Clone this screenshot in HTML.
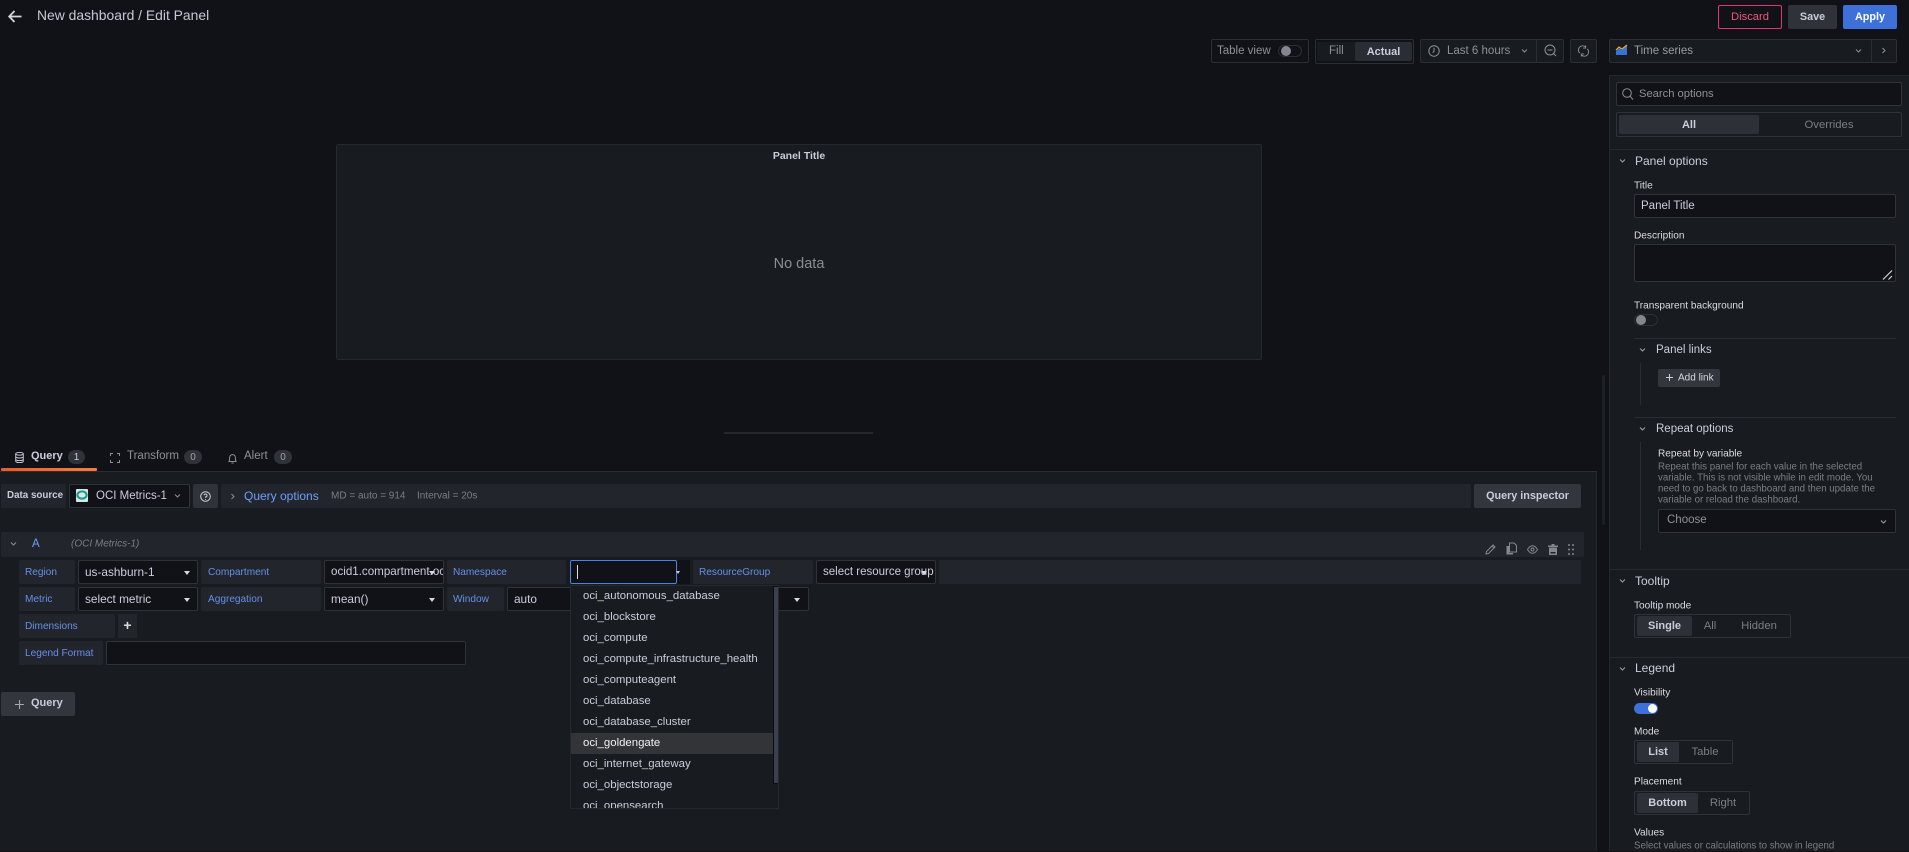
<!DOCTYPE html>
<html><head><meta charset="utf-8"><title>New dashboard / Edit Panel</title>
<style>
html,body{margin:0;padding:0;background:#111217}
body{width:1909px;height:851px;overflow:hidden;position:relative;font-family:"Liberation Sans",sans-serif;font-size:12px;color:#ccccdc}
.a{position:absolute;box-sizing:border-box;white-space:nowrap}
.b{position:absolute;box-sizing:border-box;border:1px solid #2b2e33;border-radius:2px}
.inp{position:absolute;box-sizing:border-box;background:#111217;border:1px solid #2f3237;border-radius:2px;color:#ccccdc;padding-left:6px;white-space:nowrap;overflow:hidden;font-size:11.8px;line-height:22px}
.lab{position:absolute;box-sizing:border-box;background:#22252b;color:#6690e6;font-size:10.1px;line-height:25px;padding-left:6px;border-radius:2px;white-space:nowrap}
.c{position:absolute;width:0;height:0;border-left:3px solid transparent;border-right:3px solid transparent;border-top:4px solid #d8d8e0}
.t{position:absolute;white-space:nowrap;transform:translateY(calc(-50% + 1px))}
.head{font-size:12px;color:#ccccdc}
.fl{font-size:10.1px;color:#dcdce6}
.dd{position:absolute;left:583px;font-size:11.4px;color:#ccccdc;transform:translateY(calc(-50% + 1px));white-space:nowrap}
.rad{position:absolute;box-sizing:border-box;border:1px solid #2f3237;border-radius:2px}
.on{position:absolute;box-sizing:border-box;background:#2d3036;border-radius:2px;color:#ccccdc;text-align:center;font-weight:bold;font-size:11px}
.off{position:absolute;color:#7b7e85;font-size:11.3px;transform:translate(-50%,calc(-50% + 1px));white-space:nowrap}
svg{position:absolute;overflow:visible}
</style></head>
<body>

<!-- header -->
<svg style="left:8px;top:10px" width="14" height="13" viewBox="0 0 14 13" fill="none" stroke="#d5d5e0" stroke-width="1.8"><path d="M13.5 6.5H1.5M6.5 1L1.2 6.5L6.5 12"/></svg>
<div class="t" style="left:37px;top:14px;font-size:13.9px;color:#c8c8d4">New dashboard / Edit Panel</div>

<div class="a" style="left:1718px;top:5px;width:64px;height:24px;border:1px solid #e0336f;border-radius:2px;color:#f2557f;font-size:11.2px;line-height:22px;text-align:center">Discard</div>
<div class="a" style="left:1788px;top:5px;width:49px;height:24px;background:#2f3238;border-radius:2px;color:#ccccdc;font-size:10.8px;font-weight:bold;line-height:24px;text-align:center">Save</div>
<div class="a" style="left:1843px;top:5px;width:54px;height:24px;background:#3d71d9;border-radius:2px;color:#fff;font-size:10.8px;font-weight:bold;line-height:24px;text-align:center">Apply</div>

<!-- toolbar -->
<div class="b" style="left:1211px;top:39px;width:98px;height:24px"></div>
<div class="t" style="left:1217px;top:50px;font-size:11.5px;color:#8e9097">Table view</div>
<div class="a" style="left:1278px;top:45px;width:24px;height:12px;border:1px solid #2b2e33;border-radius:6px"></div>
<div class="a" style="left:1281px;top:46px;width:10px;height:10px;border-radius:50%;background:#85878e"></div>

<div class="b" style="left:1315px;top:39px;width:99px;height:25px"></div>
<div class="a" style="left:1317px;top:42px;width:38px;height:19px;background:#181b1f"></div>
<div class="t" style="left:1329px;top:50px;font-size:11.5px;color:#8e9097">Fill</div>
<div class="a" style="left:1355px;top:42px;width:57px;height:19px;background:#2a2d33;border-radius:2px;color:#ccccdc;font-size:11px;line-height:20px;text-align:center;font-weight:bold">Actual</div>

<div class="b" style="left:1420px;top:39px;width:144px;height:24px;background:#181b1f"></div>
<div class="a" style="left:1536px;top:39px;width:1px;height:24px;background:#2b2e33"></div>
<svg style="left:1428px;top:45px" width="12" height="12" viewBox="0 0 12 12" fill="none" stroke="#8e9097" stroke-width="1"><circle cx="6" cy="6" r="5.2"/><path d="M6 2.8V6.4L4.6 7.6"/></svg>
<div class="t" style="left:1447px;top:50px;font-size:11.5px;color:#8e9097">Last 6 hours</div>
<svg style="left:1521px;top:49px" width="7" height="4" viewBox="0 0 7 4" fill="none" stroke="#8e9097"><path d="M1 .5L3.5 3L6 .5"/></svg>
<svg style="left:1544px;top:44px" width="13" height="13" viewBox="0 0 13 13" fill="none" stroke="#8e9097"><circle cx="6" cy="6" r="5"/><path d="M3.5 6H8.5M9.5 9.5L12 12"/></svg>

<div class="b" style="left:1570px;top:39px;width:27px;height:24px;background:#181b1f"></div>
<svg style="left:1578px;top:45px" width="11" height="12" viewBox="0 0 13 13" fill="none" stroke="#8e9097" stroke-width="1.1"><path d="M2 9A5 5 0 0 1 9 1.8M11 4A5 5 0 0 1 4 11.2M9 0V3H6M4 13V10H7"/></svg>

<div class="b" style="left:1609px;top:39px;width:288px;height:24px;background:#181b1f"></div>
<div class="a" style="left:1871px;top:39px;width:1px;height:24px;background:#2b2e33"></div>
<svg style="left:1616px;top:45px" width="12" height="10" viewBox="0 0 12 10"><path d="M0 6L3 3L6 5L11 0V10H0Z" fill="#3274d9"/><path d="M0 5L3 2L6 4L11 0" fill="none" stroke="#f2a72e" stroke-width="1.2"/></svg>
<div class="t" style="left:1634px;top:50px;font-size:11.5px;color:#9a9ca3">Time series</div>
<svg style="left:1855px;top:49px" width="7" height="4" viewBox="0 0 7 4" fill="none" stroke="#8e9097"><path d="M1 .5L3.5 3L6 .5"/></svg>
<svg style="left:1882px;top:47px" width="4" height="7" viewBox="0 0 4 7" fill="none" stroke="#8e9097"><path d="M.5 1L3 3.5L.5 6"/></svg>

<!-- panel -->
<div class="a" style="left:336px;top:144px;width:926px;height:216px;background:#181b1f;border:1px solid #25282d;border-radius:2px"></div>
<div class="t" style="left:799px;top:156px;font-size:10.5px;font-weight:bold;color:#ccccdc;transform:translate(-50%,-50%)">Panel Title</div>
<div class="t" style="left:799px;top:264px;font-size:14.5px;color:#8b8d94;transform:translate(-50%,-50%)">No data</div>
<div class="a" style="left:724px;top:432px;width:149px;height:2px;background:#24272c"></div>

<!-- tabs -->
<svg style="left:15px;top:452px" width="9" height="11" viewBox="0 0 9 11" fill="none" stroke="#ccccdc" stroke-width=".9"><ellipse cx="4.5" cy="1.8" rx="3.8" ry="1.4"/><path d="M.7 1.8V9.2C.7 10 2.4 10.6 4.5 10.6S8.3 10 8.3 9.2V1.8M.7 4.6C.7 5.4 2.4 6 4.5 6S8.3 5.4 8.3 4.6M.7 7.2C.7 8 2.4 8.6 4.5 8.6S8.3 8 8.3 7.2"/></svg>
<div class="t" style="left:31px;top:455px;font-size:11px;font-weight:bold;color:#ccccdc">Query</div>
<div class="a" style="left:68px;top:450px;width:17px;height:14px;border-radius:7px;background:#2f3238;color:#ccccdc;font-size:10px;line-height:15px;text-align:center">1</div>
<svg style="left:110px;top:453px" width="10" height="10" viewBox="0 0 10 10" fill="none" stroke="#8e9097" stroke-width="1"><path d="M.5 3V.5H3M7 .5H9.500V3M9.500 7V9.500H7M3 9.500H.5V7"/></svg>
<div class="t" style="left:127px;top:455px;font-size:11.500px;color:#8e9097">Transform</div>
<div class="a" style="left:184px;top:450px;width:18px;height:14px;border-radius:7px;background:#2f3238;color:#a0a2a8;font-size:10px;line-height:15px;text-align:center">0</div>
<svg style="left:228px;top:453px" width="9" height="11" viewBox="0 0 9 11" fill="none" stroke="#8e9097"><path d="M1 8.5C1.7 7.5 1.6 6 1.6 4.5A2.9 2.9 0 0 1 7.4 4.5C7.4 6 7.3 7.5 8 8.5ZM3.5 10H5.5"/></svg>
<div class="t" style="left:244px;top:455px;font-size:11.500px;color:#8e9097">Alert</div>
<div class="a" style="left:274px;top:450px;width:18px;height:14px;border-radius:7px;background:#2f3238;color:#a0a2a8;font-size:10px;line-height:15px;text-align:center">0</div>

<!-- query panel -->
<div class="a" style="left:0;top:471px;width:1597px;height:380px;background:#181b1f;border-top:1px solid #2a2d32;border-right:1px solid #25282d"></div>
<div class="a" style="left:1px;top:468px;width:96px;height:3px;background:linear-gradient(90deg,#f05a28,#fb7a3c);border-radius:1px"></div>

<div class="a" style="left:1px;top:484px;width:65px;height:24px;background:#22252b;font-size:9.800px;font-weight:bold;line-height:24px;padding-left:6px;color:#ccccdc">Data source</div>
<div class="inp" style="left:69px;top:484px;width:121px;height:24px;padding-left:26px;font-size:11.500px">OCI Metrics-1</div>
<svg style="left:76px;top:489px" width="12" height="13" viewBox="0 0 12 13"><rect width="12" height="13" rx="1" fill="#d8e6e6"/><ellipse cx="6" cy="6" rx="4.6" ry="3.6" fill="none" stroke="#159a94" stroke-width="2"/></svg>
<svg style="left:174px;top:494px" width="7" height="4" viewBox="0 0 7 4" fill="none" stroke="#8e9097"><path d="M1 .5L3.5 3L6 .5"/></svg>
<div class="a" style="left:193px;top:484px;width:25px;height:24px;background:#2f3238;border-radius:2px"></div>
<svg style="left:200px;top:491px" width="11" height="11" viewBox="0 0 11 11" fill="none" stroke="#ccccdc"><circle cx="5.5" cy="5.5" r="4.8"/><path d="M4 4.2A1.5 1.5 0 1 1 5.5 6V6.8M5.5 8V8.8"/></svg>
<div class="a" style="left:221px;top:484px;width:1250px;height:24px;background:#22252b;border-radius:2px"></div>
<svg style="left:231px;top:493px" width="4" height="7" viewBox="0 0 4 7" fill="none" stroke="#8e9097"><path d="M.5 1L3 3.5L.5 6"/></svg>
<div class="t" style="left:244px;top:495px;font-size:12px;color:#6e9fff">Query options</div>
<div class="t" style="left:331px;top:495px;font-size:10px;color:#7b7e85">MD = auto = 914</div>
<div class="t" style="left:417px;top:495px;font-size:10px;color:#7b7e85">Interval = 20s</div>
<div class="a" style="left:1474px;top:484px;width:107px;height:24px;background:#33363c;border-radius:2px;color:#ccccdc;font-size:10.800px;font-weight:bold;line-height:24px;text-align:center">Query inspector</div>

<!-- A row -->
<div class="a" style="left:1px;top:532px;width:1583px;height:25px;background:#22252b;border-radius:2px"></div>
<svg style="left:10px;top:542px" width="7" height="4" viewBox="0 0 7 4" fill="none" stroke="#8e9097"><path d="M1 .5L3.5 3L6 .5"/></svg>
<div class="t" style="left:32px;top:543px;font-size:11.500px;color:#6e9fff">A</div>
<div class="t" style="left:71px;top:543px;font-size:10px;font-style:italic;color:#7b7e85">(OCI Metrics-1)</div>
<svg style="left:1485px;top:544px" width="11" height="11" viewBox="0 0 11 11" fill="none" stroke="#85878e"><path d="M1 10L1.5 7.5L8 1L10 3L3.5 9.5ZM7 2L9 4"/></svg>
<svg style="left:1506px;top:543px" width="11" height="12" viewBox="0 0 11 12"><path d="M3.5 0H8L10.5 2.5V9H3.5Z" fill="none" stroke="#85878e"/><path d="M.5 3H3V10H7V11.5H.5Z" fill="#85878e"/></svg>
<svg style="left:1527px;top:545px" width="11" height="9" viewBox="0 0 11 9" fill="none" stroke="#85878e"><path d="M.5 4.5C2 2 3.5 .7 5.5 .7S9 2 10.5 4.5C9 7 7.500 8.300 5.500 8.300S2 7 .5 4.500Z"/><circle cx="5.500" cy="4.500" r="1.500"/></svg>
<svg style="left:1548px;top:544px" width="10" height="11" viewBox="0 0 10 11"><path d="M3.500 0H6.500V1.500H10V3H0V1.500H3.500ZM1 3.500H9V11H1ZM2.500 8V9.500H7.500V8Z" fill="#85878e" fill-rule="evenodd"/></svg>
<svg style="left:1568px;top:544px" width="6" height="11" viewBox="0 0 6 11" fill="#85878e"><circle cx="1" cy="1" r="1"/><circle cx="5" cy="1" r="1"/><circle cx="1" cy="5.500" r="1"/><circle cx="5" cy="5.500" r="1"/><circle cx="1" cy="10" r="1"/><circle cx="5" cy="10" r="1"/></svg>

<!-- row 1 -->
<div class="lab" style="left:19px;top:560px;width:56px;height:24px">Region</div>
<div class="inp" style="left:78px;top:560px;width:120px;height:24px">us-ashburn-1</div><div class="c" style="left:184px;top:571px"></div>
<div class="lab" style="left:201px;top:560px;width:120px;height:24px;padding-left:7px">Compartment</div>
<div class="inp" style="left:324px;top:560px;width:120px;height:24px;font-size:11.600px">ocid1.compartment.oc</div><div class="c" style="left:429px;top:571px"></div>
<div class="lab" style="left:447px;top:560px;width:119px;height:24px;padding-left:6px">Namespace</div>
<div class="a" style="left:570px;top:560px;width:120px;height:24px;background:#111217"></div>
<div class="a" style="left:570px;top:560px;width:107px;height:24px;border:1px solid #4c82e6;border-radius:2px;background:#111217"></div>
<div class="a" style="left:577px;top:565px;width:1px;height:14px;background:#ddd"></div>
<div class="c" style="left:676px;top:571px;border-top-color:#ccc;border-left-width:2.500px;border-right-width:2.500px;border-top-width:3px"></div>
<div class="lab" style="left:693px;top:560px;width:120px;height:24px;padding-left:6px">ResourceGroup</div>
<div class="inp" style="left:816px;top:560px;width:120px;height:24px;font-size:11.500px">select resource group</div><div class="c" style="left:921px;top:571px"></div>
<div class="a" style="left:939px;top:560px;width:642px;height:24px;background:#22252b"></div>

<!-- row 2 -->
<div class="lab" style="left:19px;top:587px;width:56px;height:24px">Metric</div>
<div class="inp" style="left:78px;top:587px;width:120px;height:24px">select metric</div><div class="c" style="left:184px;top:598px"></div>
<div class="lab" style="left:201px;top:587px;width:120px;height:24px;padding-left:7px">Aggregation</div>
<div class="inp" style="left:324px;top:587px;width:120px;height:24px">mean()</div><div class="c" style="left:429px;top:598px"></div>
<div class="lab" style="left:447px;top:587px;width:57px;height:24px;padding-left:6px">Window</div>
<div class="inp" style="left:507px;top:587px;width:302px;height:24px">auto</div><div class="c" style="left:794px;top:598px"></div>

<!-- row 3,4 -->
<div class="lab" style="left:19px;top:614px;width:96px;height:24px">Dimensions</div>
<div class="a" style="left:118px;top:614px;width:19px;height:24px;background:#22252b;color:#ddd;font-size:14px;font-weight:bold;line-height:23px;text-align:center">+</div>
<div class="lab" style="left:19px;top:641px;width:84px;height:24px">Legend Format</div>
<div class="inp" style="left:106px;top:641px;width:360px;height:24px"></div>

<div class="a" style="left:1px;top:692px;width:74px;height:24px;background:#33363c;border-radius:2px"></div>
<svg style="left:15px;top:700px" width="9" height="9" viewBox="0 0 9 9" stroke="#a8aab0" stroke-width="1.100"><path d="M4.500 0V9M0 4.500H9"/></svg>
<div class="t" style="left:31px;top:702px;font-size:11px;font-weight:bold;color:#ccccdc">Query</div>

<!-- dropdown -->
<div class="a" style="left:570px;top:585px;width:209px;height:224px;background:#181b1f;border:1px solid #25282d;overflow:hidden">
<div style="position:absolute;left:0;top:147px;width:203px;height:21px;background:#333438"></div>
<div style="position:absolute;left:202px;top:0;width:6px;height:198px;background:#3c3f50;border:1px solid #0b0c0f;box-sizing:border-box"></div>
<div class="dd" style="left:12px;top:9px">oci_autonomous_database</div>
<div class="dd" style="left:12px;top:30px">oci_blockstore</div>
<div class="dd" style="left:12px;top:51px">oci_compute</div>
<div class="dd" style="left:12px;top:72px">oci_compute_infrastructure_health</div>
<div class="dd" style="left:12px;top:93px">oci_computeagent</div>
<div class="dd" style="left:12px;top:114px">oci_database</div>
<div class="dd" style="left:12px;top:135px">oci_database_cluster</div>
<div class="dd" style="left:12px;top:156px;color:#f2f2f5">oci_goldengate</div>
<div class="dd" style="left:12px;top:177px">oci_internet_gateway</div>
<div class="dd" style="left:12px;top:198px">oci_objectstorage</div>
<div class="dd" style="left:12px;top:219px">oci_opensearch</div>
</div>

<!-- scrollbar -->
<div class="a" style="left:1602px;top:375px;width:3px;height:150px;background:#1c1f23;border-radius:2px"></div>

<!-- sidebar -->
<div class="a" style="left:1609px;top:75px;width:300px;height:776px;background:#181b1f;border:1px solid #25282d;border-width:1px 0 0 1px"></div>
<div class="inp" style="left:1616px;top:82px;width:286px;height:24px;padding-left:22px;color:#8e9097;font-size:11.200px;line-height:23px">Search options</div>
<svg style="left:1622px;top:88px" width="12" height="12" viewBox="0 0 12 12" fill="none" stroke="#8e9097"><circle cx="5" cy="5" r="4.300"/><path d="M8 8.200L11 11.500"/></svg>
<div class="rad" style="left:1616px;top:112px;width:286px;height:25px"></div>
<div class="on" style="left:1619px;top:115px;width:140px;height:19px;line-height:20px">All</div>
<div class="off" style="left:1829px;top:124px">Overrides</div>
<div class="a" style="left:1610px;top:149px;width:299px;height:1px;background:#25282d"></div>

<svg style="left:1619px;top:159px" width="7" height="4" viewBox="0 0 7 4" fill="none" stroke="#a0a2a8"><path d="M1 .5L3.500 3L6 .5"/></svg>
<div class="t head" style="left:1635px;top:160px">Panel options</div>
<div class="t fl" style="left:1634px;top:185px">Title</div>
<div class="inp" style="left:1634px;top:194px;width:262px;height:24px;font-size:11.500px">Panel Title</div>
<div class="t fl" style="left:1634px;top:235px">Description</div>
<div class="a" style="left:1634px;top:244px;width:262px;height:38px;background:#111217;border:1px solid #2f3237;border-radius:2px"></div>
<svg style="left:1882px;top:270px" width="11" height="10" viewBox="0 0 11 10" fill="none" stroke="#d0d0d8" stroke-width="1.200"><path d="M1 9.500L10 .5M6.500 9.500L10 6"/></svg>
<div class="t fl" style="left:1634px;top:305px">Transparent background</div>
<div class="a" style="left:1634px;top:314px;width:24px;height:12px;border:1px solid #2b2e33;border-radius:6px"></div>
<div class="a" style="left:1636px;top:315px;width:10px;height:10px;border-radius:50%;background:#85878e"></div>
<div class="a" style="left:1634px;top:338px;width:262px;height:1px;background:#2a2d32"></div>

<svg style="left:1639px;top:348px" width="7" height="4" viewBox="0 0 7 4" fill="none" stroke="#a0a2a8"><path d="M1 .5L3.500 3L6 .5"/></svg>
<div class="t head" style="left:1656px;top:349px;font-size:11.500px">Panel links</div>
<div class="a" style="left:1640px;top:363px;width:1px;height:42px;background:#2a2d32"></div>
<div class="a" style="left:1658px;top:369px;width:62px;height:18px;background:#33363c;border-radius:2px"></div>
<svg style="left:1666px;top:374px" width="7" height="7" viewBox="0 0 7 7" stroke="#ccccdc"><path d="M3.500 0V7M0 3.500H7"/></svg>
<div class="t" style="left:1678px;top:377px;font-size:10px;color:#d8d8e4">Add link</div>
<div class="a" style="left:1634px;top:417px;width:262px;height:1px;background:#2a2d32"></div>

<svg style="left:1639px;top:427px" width="7" height="4" viewBox="0 0 7 4" fill="none" stroke="#a0a2a8"><path d="M1 .5L3.500 3L6 .5"/></svg>
<div class="t head" style="left:1656px;top:428px;font-size:11.500px">Repeat options</div>
<div class="a" style="left:1640px;top:442px;width:1px;height:108px;background:#2a2d32"></div>
<div class="t fl" style="left:1658px;top:453px">Repeat by variable</div>
<div class="t" style="left:1658px;top:466px;font-size:9.700px;color:#7b7e85">Repeat this panel for each value in the selected</div>
<div class="t" style="left:1658px;top:477px;font-size:9.700px;color:#7b7e85">variable. This is not visible while in edit mode. You</div>
<div class="t" style="left:1658px;top:488px;font-size:9.700px;color:#7b7e85">need to go back to dashboard and then update the</div>
<div class="t" style="left:1658px;top:499px;font-size:9.700px;color:#7b7e85">variable or reload the dashboard.</div>
<div class="inp" style="left:1658px;top:509px;width:238px;height:24px;color:#8e9097;padding-left:8px;font-size:11.500px;line-height:20px">Choose</div>
<svg style="left:1880px;top:520px" width="7" height="4" viewBox="0 0 7 4" fill="none" stroke="#a0a2a8"><path d="M1 .5L3.500 3L6 .5"/></svg>

<div class="a" style="left:1610px;top:569px;width:299px;height:1px;background:#25282d"></div>
<svg style="left:1619px;top:579px" width="7" height="4" viewBox="0 0 7 4" fill="none" stroke="#a0a2a8"><path d="M1 .5L3.500 3L6 .5"/></svg>
<div class="t head" style="left:1635px;top:580px">Tooltip</div>
<div class="t fl" style="left:1634px;top:605px">Tooltip mode</div>
<div class="rad" style="left:1634px;top:614px;width:157px;height:24px"></div>
<div class="on" style="left:1637px;top:616px;width:55px;height:20px;line-height:21px">Single</div>
<div class="off" style="left:1710px;top:625px">All</div>
<div class="off" style="left:1759px;top:625px">Hidden</div>

<div class="a" style="left:1610px;top:657px;width:299px;height:1px;background:#25282d"></div>
<svg style="left:1619px;top:667px" width="7" height="4" viewBox="0 0 7 4" fill="none" stroke="#a0a2a8"><path d="M1 .5L3.500 3L6 .5"/></svg>
<div class="t head" style="left:1635px;top:667px">Legend</div>
<div class="t fl" style="left:1634px;top:692px">Visibility</div>
<div class="a" style="left:1634px;top:703px;width:24px;height:11px;border-radius:6px;background:#3d71d9"></div>
<div class="a" style="left:1648px;top:704px;width:9px;height:9px;border-radius:50%;background:#fff"></div>
<div class="t fl" style="left:1634px;top:731px">Mode</div>
<div class="rad" style="left:1634px;top:740px;width:99px;height:24px"></div>
<div class="on" style="left:1637px;top:742px;width:42px;height:20px;line-height:21px">List</div>
<div class="off" style="left:1705px;top:751px">Table</div>
<div class="t fl" style="left:1634px;top:781px">Placement</div>
<div class="rad" style="left:1634px;top:791px;width:116px;height:24px"></div>
<div class="on" style="left:1637px;top:793px;width:61px;height:20px;line-height:21px">Bottom</div>
<div class="off" style="left:1723px;top:802px">Right</div>
<div class="t fl" style="left:1634px;top:832px">Values</div>
<div class="t" style="left:1634px;top:845px;font-size:9.700px;color:#7b7e85">Select values or calculations to show in legend</div>

</body></html>
